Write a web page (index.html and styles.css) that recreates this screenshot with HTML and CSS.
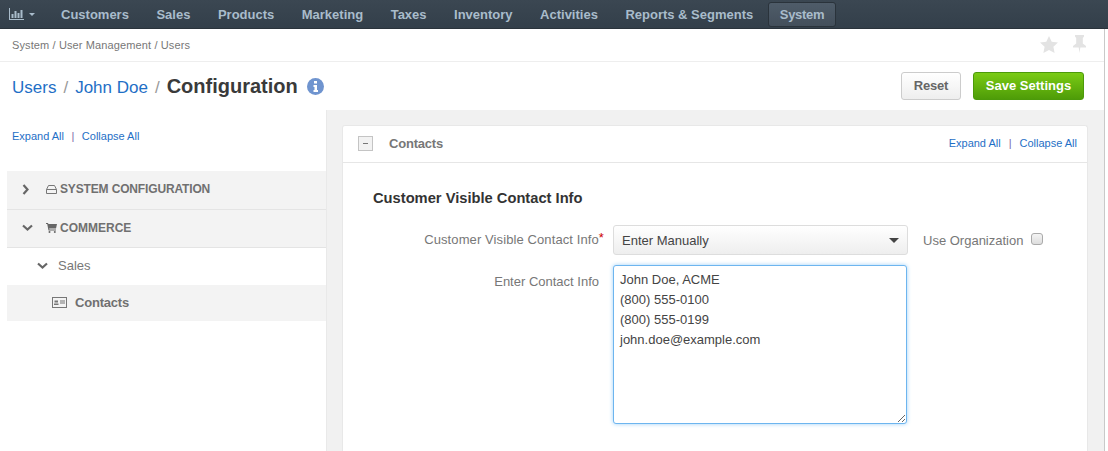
FILE: index.html
```html
<!DOCTYPE html>
<html>
<head>
    <title>Users / John Doe / Configuration</title>
    <meta charset="UTF-8">
    <link rel="stylesheet" href="styles.css">
</head>
<body>

<div id="menu">
    <div class="dash">
        <svg width="15" height="12" viewBox="0 0 15 12"><path d="M0 0h1v11h14v1H0z M2.500 6h2v4h-2z M5.500 3h2v7h-2z M8.500 5h2v5h-2z M11.500 2h2v8h-2z" fill="#a9bccb"/></svg>
        <span class="caret"></span>
    </div>
    <a>Customers</a>
    <a>Sales</a>
    <a>Products</a>
    <a>Marketing</a>
    <a>Taxes</a>
    <a>Inventory</a>
    <a>Activities</a>
    <a>Reports &amp; Segments</a>
    <a class="active">System</a>
</div>

<div id="page">
    <div id="crumbs">
        <span>System / User Management / Users</span>
        <div class="crumb-icons">
            <svg width="18" height="17" viewBox="0 0 18 17"><path d="M9 0l2.700 5.700 6.300.8-4.600 4.300 1.200 6.200L9 14l-5.600 3 1.200-6.200L0 6.500l6.300-.8z" fill="#e3e3e3"/></svg>
            <svg width="13" height="18" viewBox="0 0 13 18"><path d="M2 0h9v1.500L9.800 3v5.500L13 11v1.500H7.300l-.8 5.500-.8-5.500H0V11l3.200-2.500V3L2 1.500z" fill="#e3e3e3"/></svg>
        </div>
    </div>

    <div id="titlebar">
        <h1><a>Users</a><i>/</i><a>John Doe</a><i>/</i><b>Configuration</b></h1>
        <svg class="info" width="17" height="17" viewBox="0 0 17 17"><circle cx="8.500" cy="8.500" r="8.500" fill="#6f94cf"/><path d="M7 3h3v2.500H7z M6.500 7H10v5h1v2H6.500v-2h1V9h-1z" fill="#fff"/></svg>
        <div class="actions">
            <button class="btn">Reset</button>
            <button class="btn save">Save Settings</button>
        </div>
    </div>

    <div id="main">
        <div id="sidebar">
            <div class="links side-links"><a>Expand All</a><i>|</i><a>Collapse All</a></div>
            <div class="tree-head">
                <svg class="chev closed" width="8" height="11" viewBox="0 0 8 11"><path d="M1.500 1l4 4.500-4 4.500" fill="none" stroke="#666" stroke-width="2.200"/></svg>
                <svg class="ico" width="11" height="9" viewBox="0 0 11 9"><path d="M2.500.5h6l2 4v4h-10v-4zM.5 4.500h10" fill="none" stroke="#777"/></svg>
                <span class="wide-name">SYSTEM CONFIGURATION</span>
            </div>
            <div class="tree-head">
                <svg class="chev" width="11" height="8" viewBox="0 0 11 8"><path d="M1 1.500l4.500 4 4.500-4" fill="none" stroke="#666" stroke-width="2.200"/></svg>
                <svg class="ico" width="11" height="10" viewBox="0 0 11 10"><path d="M0 0h2l.4 1H11l-1 4.500H3.200l.2 1H10v1H2.500L1.200 1H0z" fill="#666"/><circle cx="3.500" cy="9" r="1" fill="#666"/><circle cx="8.800" cy="9" r="1" fill="#666"/></svg>
                COMMERCE
            </div>
            <div class="tree-sub">
                <svg class="chev" width="11" height="8" viewBox="0 0 11 8"><path d="M1 1.500l4.500 4 4.500-4" fill="none" stroke="#666" stroke-width="2.200"/></svg>
                Sales
            </div>
            <div class="tree-item">
                <svg width="15" height="11" viewBox="0 0 15 11"><rect x=".5" y=".5" width="14" height="10" fill="none" stroke="#777"/><path d="M2.500 3.500h3.500v2H2.500z M2 6.500h4.500V8H2z M8 3.500h5v1H8z M8 5.500h5v1H8z" fill="#777"/></svg>
                Contacts
            </div>
        </div>

        <div id="content">
            <div class="panel">
                <div class="panel-head">
                    <span class="toggle"></span>
                    <span class="panel-title">Contacts</span>
                    <div class="links"><a>Expand All</a><i>|</i><a>Collapse All</a></div>
                </div>
                <div class="panel-body">
                    <h3>Customer Visible Contact Info</h3>
                    <div class="row">
                        <label>Customer Visible Contact Info<em>*</em></label>
                        <div class="select">Enter Manually<span class="arrow"></span></div>
                        <div class="use-org">Use Organization <span class="check"></span></div>
                    </div>
                    <div class="row">
                        <label class="area-label">Enter Contact Info</label>
                        <textarea>John Doe, ACME
(800) 555-0100
(800) 555-0199
john.doe@example.com</textarea>
                    </div>
                </div>
            </div>
        </div>
    </div>
</div>

</body>
</html>
```

FILE: styles.css
```css
html {
    box-sizing: border-box;
}
*, *:before, *:after {
    box-sizing: inherit;
}

html, body{
    height: 100%;
}

body{
    margin: 0;
    font-family: "Liberation Sans", Arial, Helvetica, sans-serif;
    font-size: 13px;
    color: #666;
    background-color: #fff;
    overflow: hidden;
    display: flex;
    flex-direction: column;
}

#menu{
    height: 29px;
    flex: none;
    display: flex;
    align-items: center;
    padding-left: 9px;
    background: linear-gradient(#3b4752, #333f4a);
    border-bottom: 1px solid #2a333b;
}

.dash{
    display: flex;
    align-items: center;
    width: 38px;
    gap: 5px;
    margin-right: 14px;
}

.caret{
    border: 3px solid transparent;
    border-top: 3px solid #a9bccb;
    border-bottom: 0;
    width: 0;
}

#menu a{
    font-size: 13px;
    font-weight: bold;
    color: #a9bccb;
    margin-right: 27.500px;
}

#menu a.active{
    margin: 0 0 0 -13px;
    padding: 0 11px;
    line-height: 23px;
    letter-spacing: -0.300px;
    border-radius: 3px;
    background: linear-gradient(#4f5c69, #434f5b);
    border: 1px solid #2a333b;
}

#page{
    flex: 1;
    min-height: 0;
    width: 1105px;
    display: flex;
    flex-direction: column;
    border-right: 1px solid #c9c9c9;
}

#crumbs{
    height: 33px;
    flex: none;
    display: flex;
    align-items: center;
    justify-content: space-between;
    padding: 0 18px 0 12px;
    font-size: 11px;
    letter-spacing: 0.120px;
    color: #777;
    border-bottom: 1px solid #eee;
}

.crumb-icons{
    display: flex;
    align-items: center;
    gap: 15px;
    padding-bottom: 2px;
}

#titlebar{
    height: 48px;
    flex: none;
    display: flex;
    align-items: center;
    padding: 0 20px 0 12px;
}

h1{
    margin: 0;
    font-size: 18px;
    font-weight: normal;
    display: flex;
    align-items: baseline;
}

h1 a{
    color: #1f6fc6;
    font-size: 17px;
}

h1 i{
    font-style: normal;
    color: #999;
    font-size: 17px;
    margin: 0 7px;
}

h1 b{
    font-size: 20px;
    color: #3a3a3a;
}

.info{
    margin-left: 9px;
}

.actions{
    margin-left: auto;
    display: flex;
    gap: 12px;
}

.btn{
    width: 60px;
    height: 28px;
    padding: 0 0 2px 0;
    font-family: inherit;
    font-size: 13px;
    font-weight: bold;
    letter-spacing: -0.200px;
    color: #666;
    border: 1px solid #ccc;
    border-radius: 3px;
    background: linear-gradient(#fff, #eee);
}

.btn.save{
    width: 111px;
    letter-spacing: 0;
    color: #fff;
    border-color: #4c9a0a;
    background: linear-gradient(#7acb14, #4e9c08);
}

#main{
    flex: 1;
    display: flex;
    min-height: 0;
    background-color: #f1f1f1;
}

#sidebar{
    width: 327px;
    flex: none;
    padding-left: 7px;
    background-color: #fff;
    border-right: 1px solid #e9e9e9;
}

.links{
    font-size: 11px;
    display: flex;
    align-items: center;
}

.links a{
    color: #1f6fc6;
}

.links i{
    font-style: normal;
    color: #7a6aa8;
    margin: 0 8px;
}

.side-links{
    margin-left: 5px;
    height: 61px;
    padding-bottom: 9px;
}

.side-links i{
    margin: 0 7.500px;
}

.panel-head .links{
    margin-left: auto;
}

.tree-head{
    height: 38.500px;
    display: flex;
    align-items: center;
    font-size: 12px;
    font-weight: bold;
    color: #707070;
    background-color: #f3f3f3;
    border-bottom: 1px solid #e4e4e4;
    padding: 0 0 1px 15px;
}

.wide-name{
    letter-spacing: -0.150px;
}

.tree-head .chev{
    margin-right: 13px;
}

.tree-head .chev.closed{
    margin-left: 0;
    margin-right: 16px;
}

.tree-head .ico{
    margin-right: 3px;
}

.tree-sub{
    height: 37px;
    display: flex;
    align-items: center;
    gap: 10px;
    padding: 0 0 2px 30px;
    font-size: 13px;
    color: #777;
}

.tree-item{
    height: 36px;
    display: flex;
    align-items: center;
    gap: 8px;
    padding: 0 0 2px 45px;
    font-size: 13px;
    font-weight: bold;
    letter-spacing: -0.200px;
    color: #707070;
    background-color: #f3f3f3;
}

#content{
    flex: 1;
    padding: 15px 16px 0 15px;
    min-width: 0;
}

.panel{
    background-color: #fff;
    border: 1px solid #e8e8e8;
    border-bottom: 0;
    border-radius: 3px 3px 0 0;
    height: 100%;
}

.panel-head{
    height: 37px;
    display: flex;
    align-items: center;
    padding: 0 10px 2px 15px;
    border-bottom: 1px solid #e6e6e6;
}

.toggle{
    width: 15px;
    height: 15px;
    border: 1px solid #c4c4c4;
    background: linear-gradient(#777, #777) center / 5px 1px no-repeat, #f2f2f2;
    margin-right: 16px;
}

.panel-title{
    font-size: 13px;
    font-weight: bold;
    letter-spacing: -0.200px;
    color: #777;
}

.panel-body{
    padding: 27px 0 0 30px;
}

h3{
    margin: 0 0 19px 0;
    font-size: 14.700px;
    color: #333;
}

.row{
    display: flex;
    align-items: flex-start;
    margin-bottom: 10px;
}

label{
    width: 240px;
    padding: 7px 9px 0 0;
    text-align: right;
    font-size: 13px;
    letter-spacing: 0.100px;
    color: #777;
    flex: none;
}

label em{
    color: #c00;
    font-style: normal;
    position: relative;
    top: -2px;
}

.area-label{
    padding: 9px 14px 0 0;
    letter-spacing: 0;
}

.select{
    width: 295px;
    height: 30px;
    padding-left: 8px;
    display: flex;
    align-items: center;
    font-size: 13px;
    color: #444;
    border: 1px solid #ddd;
    border-radius: 3px;
    background: linear-gradient(#fff, #eee);
    position: relative;
}

.arrow{
    position: absolute;
    right: 8px;
    top: 12px;
    border: 5px solid transparent;
    border-top: 5px solid #444;
    border-bottom: 0;
}

.use-org{
    margin-left: 15px;
    display: flex;
    align-items: center;
    height: 30px;
    font-size: 13px;
    color: #777;
}

.check{
    width: 12px;
    height: 12px;
    margin: 0 0 2px 8px;
    border: 1px solid #aaa;
    border-radius: 3px;
    background: linear-gradient(#f4f4f4, #ddd);
}

textarea{
    width: 294px;
    height: 159px;
    padding: 4px 6px;
    font-family: inherit;
    font-size: 13px;
    line-height: 20px;
    color: #444;
    border: 1px solid #6db5ef;
    border-radius: 3px;
    box-shadow: 0 0 4px #9fd0f7;
    outline: none;
}
```
